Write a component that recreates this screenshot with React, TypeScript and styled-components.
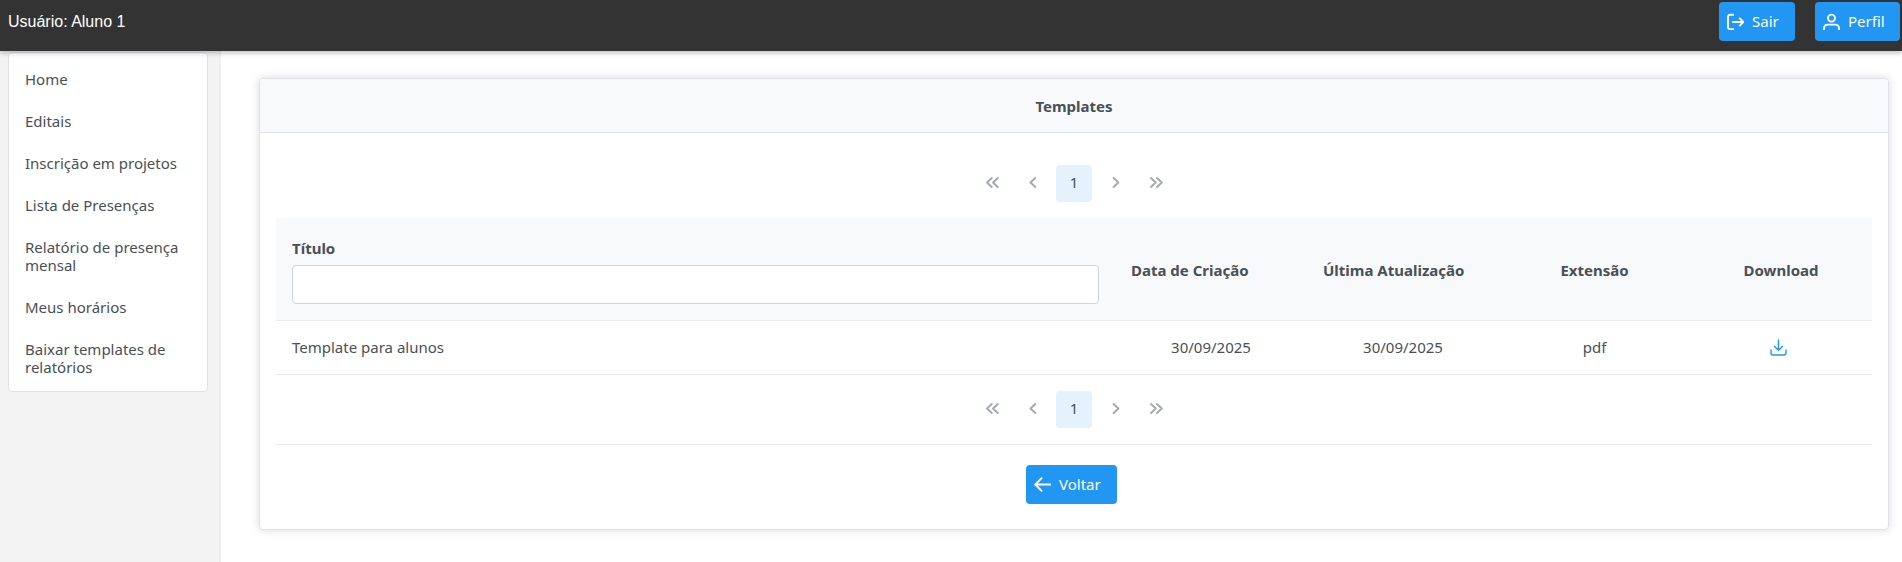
import React from "react";
import styled, { createGlobalStyle } from "styled-components";

const GlobalStyle = createGlobalStyle`
  *, *::before, *::after { box-sizing: border-box; }
  body {
    margin: 0;
    background: #fff;
    color: #495057;
    font-family: "Noto Sans", "Open Sans", sans-serif;
    font-size: 15px;
    line-height: 21px;
  }
  button, input { font: inherit; }
`;

const Page = styled.div`
  display: flex;
  flex-direction: column;
  min-height: 100vh;
`;

const TopBar = styled.header`
  position: relative;
  display: flex;
  justify-content: space-between;
  height: 51px;
  padding: 2px 2px 0 8px;
  background: #333;
  box-shadow: 0 2px 5px rgba(0, 0, 0, 0.25);
`;

const UserName = styled.span`
  padding-top: 9px;
  color: #fff;
  font-family: "Liberation Sans", Arial, sans-serif;
  font-size: 16px;
`;

const TopActions = styled.div`
  display: flex;
  gap: 20px;
`;

const Button = styled.button<{ $wide?: number }>`
  display: inline-flex;
  align-items: center;
  gap: 8px;
  width: ${(p) => p.$wide}px;
  height: 39px;
  padding: 0 8px;
  border: 0;
  border-radius: 4px;
  background: #2196f3;
  color: #fff;
  cursor: pointer;
`;

const Body = styled.div`
  display: flex;
  flex: 1;
`;

const Sidebar = styled.aside`
  flex: 0 0 221px;
  padding: 1px 11px 0 8px;
  border-right: 2px solid #efefef;
  background: #f3f3f3;
`;

const Menu = styled.ul`
  margin: 0;
  padding: 5px 0 3px;
  border: 1px solid #dee2e6;
  border-radius: 4px;
  background: #fff;
  list-style: none;
`;

const MenuLink = styled.a`
  display: block;
  padding: 12px 16px;
  color: #495057;
  line-height: 18px;
  text-decoration: none;
`;

const Main = styled.main`
  flex: 1;
  min-width: 0;
  padding: 27px 13px 32px 38px;
`;

const Card = styled.section`
  border: 1px solid #dee2e6;
  border-radius: 4px;
  box-shadow: 0 0 10px rgba(0, 0, 0, 0.15);
`;

const CardTitle = styled.h1`
  margin: 0;
  padding: 17px 16px 15px;
  border-bottom: 1px solid #dee2e6;
  border-radius: 3px 3px 0 0;
  background: #f8f9fa;
  font-size: 15px;
  font-weight: 700;
  line-height: 21px;
  text-align: center;
`;

const CardBody = styled.div`
  padding: 16px 16px 25px;
`;

const PaginatorBar = styled.nav<{ $line?: boolean }>`
  display: flex;
  justify-content: center;
  gap: 5px;
  padding: 16px;
  border-bottom: ${(p) => (p.$line ? "1px solid #e9ecef" : "0")};
`;

const PageButton = styled.button<{ $current?: boolean }>`
  display: flex;
  align-items: center;
  justify-content: center;
  width: 36px;
  height: 37px;
  padding: 0 0 2px;
  border: 0;
  border-radius: 4px;
  background: ${(p) => (p.$current ? "#e3f2fd" : "transparent")};
  color: ${(p) => (p.$current ? "#495057" : "#a4a9ae")};
`;

const Table = styled.table`
  width: 100%;
  border-collapse: separate;
  border-spacing: 0;
  table-layout: fixed;
`;

const HeadCell = styled.th<{ $width?: number; $align?: string }>`
  width: ${(p) => (p.$width ? `${p.$width}px` : "auto")};
  padding: 18px 16px 16px;
  border-bottom: 1px solid #e9ecef;
  background: #f8f9fa;
  font-weight: 700;
  text-align: ${(p) => p.$align || "left"};
  white-space: nowrap;
`;

const Cell = styled.td<{ $align?: string }>`
  padding: 16px;
  border-bottom: 1px solid #e9ecef;
  text-align: ${(p) => p.$align || "center"};
`;

const FilterLabel = styled.label`
  display: block;
  margin-bottom: 5px;
  line-height: 24px;
`;

const FilterInput = styled.input`
  display: block;
  width: 100%;
  height: 39px;
  padding: 8px;
  border: 1px solid #ced4da;
  border-radius: 4px;
  background: #fff;
  color: #495057;
`;

const IconCell = styled(Cell)`
  padding-right: 21px;
`;

const IconButton = styled.button`
  display: block;
  margin: 0 auto;
  padding: 0;
  border: 0;
  background: transparent;
  color: #2196f3;
  cursor: pointer;
`;

const Footer = styled.div`
  display: flex;
  justify-content: center;
  padding: 20px 5px 0 0;
`;

const Svg = styled.svg`
  display: block;
  flex: none;
  fill: none;
  stroke: currentColor;
  stroke-linecap: round;
  stroke-linejoin: round;
`;

const paths = {
  signOut: "M6.2 1.8H3Q1 1.8 1 3.8V14.2Q1 16.2 3 16.2H6.2M6 9H16.3M12.8 5.4L16.3 9L12.8 12.6",
  user: "M8.5 8.6A3.5 3.5 0 1 0 8.5 1.6A3.5 3.5 0 1 0 8.5 8.6ZM1 16.2V15.5Q1 11.6 5 11.6H12Q16 11.6 16 15.5V16.2",
  back: "M16.2 8.5H1.4M7.6 2.2L1.3 8.5L7.6 14.8",
  download: "M8.5 1V11.2M4.5 7.4L8.5 11.3L12.5 7.4M1 11V14Q1 16 3 16H14Q16 16 16 14V11",
  first: "M7.8 4L3 8.5L7.8 13M13.8 4L9 8.5L13.8 13",
  prev: "M10.3 4L5.5 8.5L10.3 13",
  next: "M6.6 4L11.4 8.5L6.6 13",
  last: "M3 4L7.8 8.5L3 13M9 4L13.8 8.5L9 13",
};

function Icon({ name, weight = 1.9 }: { name: keyof typeof paths; weight?: number }) {
  return (
    <Svg width="17" height="17" viewBox="0 0 17 17" strokeWidth={weight} aria-hidden="true">
      <path d={paths[name]} />
    </Svg>
  );
}

function Paginator({ line }: { line?: boolean }) {
  return (
    <PaginatorBar $line={line} aria-label="Paginação">
      <PageButton disabled aria-label="Primeira página"><Icon name="first" /></PageButton>
      <PageButton disabled aria-label="Página anterior"><Icon name="prev" /></PageButton>
      <PageButton $current aria-current="page">1</PageButton>
      <PageButton disabled aria-label="Próxima página"><Icon name="next" /></PageButton>
      <PageButton disabled aria-label="Última página"><Icon name="last" /></PageButton>
    </PaginatorBar>
  );
}

const menuItems = [
  "Home",
  "Editais",
  "Inscrição em projetos",
  "Lista de Presenças",
  "Relatório de presença mensal",
  "Meus horários",
  "Baixar templates de relatórios",
];

const templates = [
  { title: "Template para alunos", created: "30/09/2025", updated: "30/09/2025", extension: "pdf" },
];

export default function App() {
  return (
    <Page>
      <GlobalStyle />
      <TopBar>
        <UserName>Usuário: Aluno 1</UserName>
        <TopActions>
          <Button $wide={76}><Icon name="signOut" />Sair</Button>
          <Button $wide={85}><Icon name="user" />Perfil</Button>
        </TopActions>
      </TopBar>
      <Body>
        <Sidebar>
          <Menu>
            {menuItems.map((item) => (
              <li key={item}><MenuLink href="#">{item}</MenuLink></li>
            ))}
          </Menu>
        </Sidebar>
        <Main>
          <Card>
            <CardTitle>Templates</CardTitle>
            <CardBody>
              <Paginator />
              <Table>
                <thead>
                  <tr>
                    <HeadCell>
                      <FilterLabel htmlFor="title-filter">Título</FilterLabel>
                      <FilterInput id="title-filter" type="text" />
                    </HeadCell>
                    <HeadCell $width={192}>Data de Criação</HeadCell>
                    <HeadCell $width={192}>Última Atualização</HeadCell>
                    <HeadCell $width={191} $align="center">Extensão</HeadCell>
                    <HeadCell $width={182} $align="center">Download</HeadCell>
                  </tr>
                </thead>
                <tbody>
                  {templates.map((t) => (
                    <tr key={t.title}>
                      <Cell $align="left">{t.title}</Cell>
                      <Cell>{t.created}</Cell>
                      <Cell>{t.updated}</Cell>
                      <Cell>{t.extension}</Cell>
                      <IconCell>
                        <IconButton aria-label="Download"><Icon name="download" weight={1.4} /></IconButton>
                      </IconCell>
                    </tr>
                  ))}
                </tbody>
              </Table>
              <Paginator line />
              <Footer>
                <Button $wide={91}><Icon name="back" />Voltar</Button>
              </Footer>
            </CardBody>
          </Card>
        </Main>
      </Body>
    </Page>
  );
}
